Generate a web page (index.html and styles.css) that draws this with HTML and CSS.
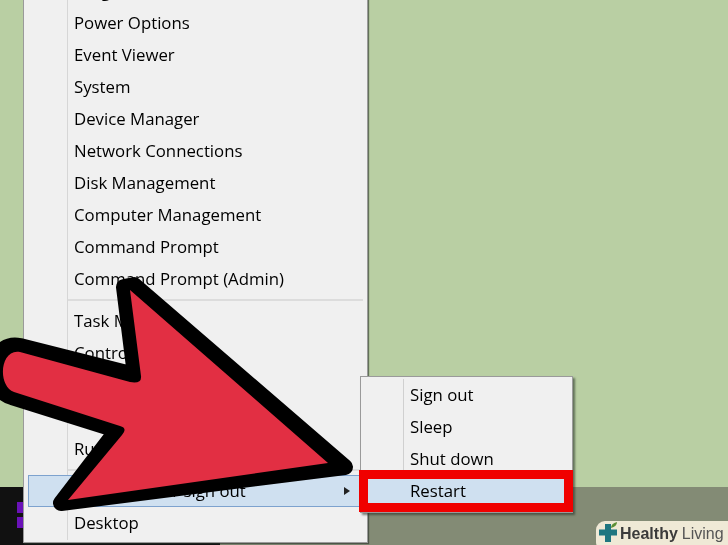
FILE: index.html
```html
<!DOCTYPE html>
<html lang="en">
<head>
<meta charset="utf-8">
<title>Restart menu</title>
<link rel="stylesheet" href="styles.css">
</head>
<body>
<div class="desktop">
  <div class="wallpaper"></div>
  <div class="taskbar">
    <div class="start-zone">
      <div class="start-icon"><span></span><span></span></div>
    </div>
  </div>

  <div class="menu">
    <div class="row">Programs and Features</div>
    <div class="row">Power Options</div>
    <div class="row">Event Viewer</div>
    <div class="row">System</div>
    <div class="row">Device Manager</div>
    <div class="row">Network Connections</div>
    <div class="row">Disk Management</div>
    <div class="row">Computer Management</div>
    <div class="row">Command Prompt</div>
    <div class="row">Command Prompt (Admin)</div>
    <div class="sep"></div>
    <div class="row">Task Manager</div>
    <div class="row">Control Panel</div>
    <div class="row">File Explorer</div>
    <div class="row">Search</div>
    <div class="row">Run</div>
    <div class="sep"></div>
    <div class="row active">Shut down or sign out<span class="caret"></span></div>
    <div class="row">Desktop</div>
  </div>

  <div class="submenu">
    <div class="subrow">Sign out</div>
    <div class="subrow">Sleep</div>
    <div class="subrow">Shut down</div>
    <div class="subrow restart">Restart</div>
  </div>

  <svg class="arrow" width="360" height="240" viewBox="0 0 360 240">
    <path d="M124 17 L134 15 L345 197 L61 233 L117 160 L12 127 C-14 120 -10 70 20 76 L135 105 Z" fill="#000" stroke="#000" stroke-width="16" stroke-linejoin="round"/>
    <path d="M130 20 L328 193 L68 230 L122 165 Q128 158 120 156 L14 122 C-3 116 0 78 20 82 L130 112 Q142 114 141 106 Z" fill="#e22f43"/>
  </svg>

  <div class="badge">
    <svg class="badge-icon" width="24" height="24" viewBox="0 0 24 24">
      <path d="M7 1h6v5.500h6v6h-6v6.500H7v-6.500H1v-6h6z" fill="#1f7680"/>
      <path d="M13 5c0-3 2-5 6-6 0 3-2 5-6 6z" fill="#5c8f35"/>
    </svg>
    <span class="brand-a">Healthy</span><span class="brand-b">Living</span>
  </div>
</div>
</body>
</html>
```

FILE: styles.css
```css
html, body {
  margin: 0;
  padding: 0;
}

body {
  width: 728px;
  height: 545px;
  overflow: hidden;
  font-family: "Open Sans", "Noto Sans", sans-serif;
  color: #000;
}

.desktop {
  position: relative;
  display: flex;
  flex-direction: column;
  width: 728px;
  height: 545px;
  overflow: hidden;
  filter: blur(0.35px);
}

.wallpaper {
  height: 487px;
  background: #b9cfa3;
}

.taskbar {
  flex: 1;
  background: #838b75;
}

.start-zone {
  width: 220px;
  height: 100%;
  background: #111;
  display: flex;
  align-items: flex-start;
  padding: 15px 0 0 17px;
  box-sizing: border-box;
}

.start-icon {
  display: flex;
  flex-direction: column;
  gap: 4px;
}

.start-icon span {
  display: block;
  width: 8px;
  height: 11px;
  background: #6a12b8;
}

.menu {
  position: absolute;
  left: 23px;
  top: -27px;
  width: 345px;
  height: 570px;
  box-sizing: border-box;
  padding: 1px 4px 0;
  background: #f0f0f0;
  border: 1px solid #9a9a9a;
  box-shadow: 1px 1px 1px rgba(40, 50, 40, 0.6);
}

.menu::before {
  content: "";
  position: absolute;
  left: 43px;
  top: 0;
  bottom: 2px;
  width: 1px;
  background: #d6d6d6;
}

.row {
  position: relative;
  height: 32px;
  line-height: 31px;
  padding-left: 46px;
  font-size: 16.8px;
  white-space: nowrap;
}

.sep {
  height: 2px;
  margin: 4px 0 4px 40px;
  background: #dcdcdc;
}

.row.active {
  box-sizing: border-box;
  margin-right: 3px;
  background: #cfe0f0;
  border: 1px solid #7da2ce;
  padding-left: 45px;
  line-height: 29px;
}

.caret {
  position: absolute;
  right: 9px;
  top: 11px;
  border-left: 6px solid #222;
  border-top: 4px solid transparent;
  border-bottom: 4px solid transparent;
}

.submenu {
  position: absolute;
  left: 360px;
  top: 376px;
  width: 213px;
  box-sizing: border-box;
  padding: 3px 8px 4px 7px;
  background: #f0f0f0;
  border: 1px solid #9a9a9a;
  box-shadow: 2px 2px 2px rgba(40, 50, 40, 0.6);
}

.submenu::before {
  content: "";
  position: absolute;
  left: 42px;
  top: 2px;
  bottom: 8px;
  width: 1px;
  background: #d0d0d0;
}

.subrow {
  position: relative;
  height: 32px;
  line-height: 29px;
  padding-left: 42px;
  font-size: 16.8px;
}

.subrow.restart {
  height: 24px;
  line-height: 23px;
  margin: 3px 0 5px;
  background: #cfe0f0;
  outline: 9px solid #f00000;
}

.arrow {
  position: absolute;
  left: 0;
  top: 270px;
  overflow: visible;
}

.badge {
  position: absolute;
  left: 596px;
  top: 521px;
  width: 140px;
  height: 30px;
  box-sizing: border-box;
  display: flex;
  align-items: flex-start;
  padding: 2px 0 0 2px;
  background: #efe9d6;
  border-radius: 9px;
  font-family: "Liberation Sans", sans-serif;
  font-size: 16px;
  line-height: 22px;
}

.badge-icon {
  flex: none;
  margin-right: -2px;
  overflow: visible;
}

.brand-a {
  font-weight: 700;
  color: #3b3b3b;
  margin-right: 4px;
}

.brand-b {
  color: #555;
}
```
